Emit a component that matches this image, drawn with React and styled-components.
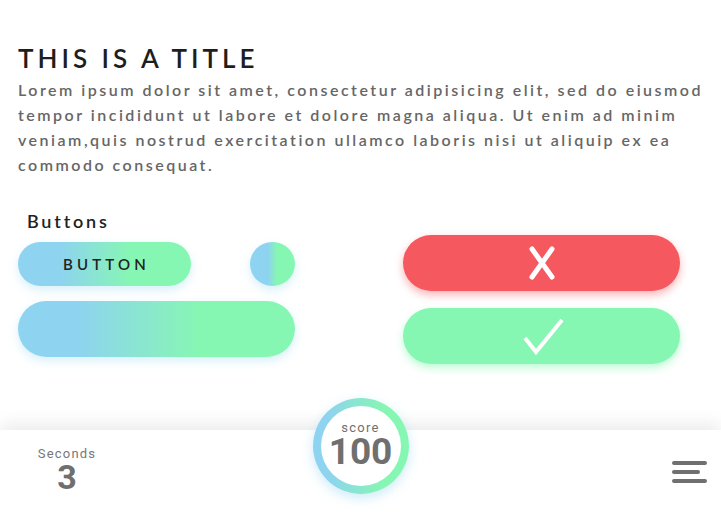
import React from 'react';
import styled, { createGlobalStyle } from 'styled-components';

const BLUE = '#8ed3f0';
const GREEN = '#86f7b2';
const RED = '#f5585f';

const GlobalStyle = createGlobalStyle`
  html, body {
    margin: 0;
    padding: 0;
    background: #fff;
  }
  body {
    font-family: Lato, "Open Sans", Arial, sans-serif;
  }
`;

const Page = styled.div`
  display: flex;
  flex-direction: column;
  min-height: 100vh;
  box-sizing: border-box;
  overflow: hidden;
`;

const Content = styled.main`
  padding: 43px 18px 0 18px;
`;

const Title = styled.h1`
  margin: 0;
  font-size: 26px;
  line-height: 30px;
  font-weight: 600;
  letter-spacing: 4px;
  color: #1e1e1e;
`;

const Body = styled.p`
  margin: 4px 0 0;
  font-size: 16px;
  line-height: 25px;
  font-weight: 600;
  letter-spacing: 2.5px;
  color: #666;
  white-space: nowrap;
`;

const Section = styled.section`
  display: grid;
  grid-template-columns: 277px 277px;
  column-gap: 108px;
  margin-top: 33px;
`;

const Column = styled.div`
  display: flex;
  flex-direction: column;
  gap: ${p => p.$gap}px;
  padding-top: ${p => p.$top || 0}px;
`;

const Label = styled.h2`
  margin: 0 0 -5px 9px;
  font-size: 18px;
  line-height: 22px;
  font-weight: 600;
  letter-spacing: 2.8px;
  color: #222;
`;

const Row = styled.div`
  display: flex;
  justify-content: space-between;
  align-items: center;
`;

const GradientButton = styled.button`
  border: none;
  outline: 0;
  padding: 0;
  cursor: pointer;
  width: ${p => p.$width};
  height: ${p => p.$height}px;
  border-radius: ${p => p.$height / 2}px;
  background: linear-gradient(to right, ${BLUE} ${p => p.$from}%, ${GREEN} ${p => p.$to}%);
  box-shadow: 0 4px 10px rgba(142, 211, 240, 0.35);
  font-family: Lato, Arial, sans-serif;
  font-size: 15px;
  font-weight: 600;
  letter-spacing: 4.2px;
  color: #222;
  padding-left: 4px;
`;

const SolidButton = styled.button`
  display: flex;
  align-items: center;
  justify-content: center;
  border: none;
  outline: 0;
  padding: 0;
  cursor: pointer;
  width: 100%;
  height: 56px;
  border-radius: 28px;
  background: ${p => p.$color};
  box-shadow: 0 4px 9px ${p => p.$glow};
`;

const Footer = styled.footer`
  margin-top: auto;
  height: 84px;
  background: #fff;
  box-shadow: 0 -6px 16px rgba(0, 0, 0, 0.08);
  display: grid;
  grid-template-columns: 134px 1fr 96px 1fr 134px;
  align-items: start;
`;

const Stat = styled.div`
  display: flex;
  flex-direction: column;
  align-items: center;
  gap: 3px;
  padding-top: 17px;
  font-family: Roboto, Arial, sans-serif;
  color: #6f6f6f;
`;

const StatLabel = styled.span`
  font-size: 13px;
  line-height: 14px;
  letter-spacing: 1.2px;
  color: #777;
`;

const StatValue = styled.span`
  font-size: 34px;
  line-height: 26px;
  font-weight: 700;
`;

const ScoreRing = styled.div`
  grid-column: 3;
  width: 96px;
  height: 96px;
  margin-top: -32px;
  border-radius: 50%;
  padding: 8px;
  box-sizing: border-box;
  background: linear-gradient(to right, ${BLUE} 15%, ${GREEN} 75%);
  box-shadow: 0 4px 12px rgba(142, 211, 240, 0.45);
`;

const ScoreInner = styled.div`
  width: 100%;
  height: 100%;
  border-radius: 50%;
  background: #fff;
  display: flex;
  flex-direction: column;
  align-items: center;
  gap: 4px;
  font-family: Roboto, Arial, sans-serif;
  color: #6f6f6f;
  padding-top: 16px;
  box-sizing: border-box;
`;

const ScoreLabel = styled.span`
  font-size: 13px;
  line-height: 12px;
  letter-spacing: 1.3px;
  color: #707070;
`;

const ScoreValue = styled.span`
  font-size: 37px;
  line-height: 28px;
  font-weight: 700;
`;

const Menu = styled.button`
  grid-column: 5;
  justify-self: end;
  margin: 31px 14px 0 0;
  width: 35px;
  display: flex;
  flex-direction: column;
  gap: 5px;
  border: none;
  background: none;
  padding: 0;
  cursor: pointer;
`;

const MenuLine = styled.span`
  display: block;
  height: 4px;
  border-radius: 2px;
  background: #707070;
  width: ${p => p.$short ? 28 : 35}px;
`;

const CrossIcon = () => (
  <svg width="32" height="38" viewBox="0 0 32 38">
    <g stroke="#fff" strokeWidth="5" strokeLinecap="round">
      <line x1="6" y1="5" x2="26" y2="33" />
      <line x1="26" y1="5" x2="6" y2="33" />
    </g>
  </svg>
);

const CheckIcon = () => (
  <svg width="44" height="40" viewBox="0 0 44 40">
    <polyline points="5,22 16,36 42,4" fill="none" stroke="#fff" strokeWidth="4" />
  </svg>
);

const App = () => {
  return (
    <Page>
      <GlobalStyle />
      <Content>
        <Title>THIS IS A TITLE</Title>
        <Body>
          Lorem ipsum dolor sit amet, consectetur adipisicing elit, sed do eiusmod<br />
          tempor incididunt ut labore et dolore magna aliqua. Ut enim ad minim<br />
          veniam,quis nostrud exercitation ullamco laboris nisi ut aliquip ex ea<br />
          commodo consequat.
        </Body>
        <Section>
          <Column $gap={15}>
            <Label>Buttons</Label>
            <Row>
              <GradientButton $width="173px" $height={44} $from={24} $to={66}>BUTTON</GradientButton>
              <GradientButton $width="45px" $height={44} $from={40} $to={60} aria-label="round" />
            </Row>
            <GradientButton $width="100%" $height={56} $from={21} $to={66} aria-label="wide" />
          </Column>
          <Column $gap={17} $top={25}>
            <SolidButton $color={RED} $glow="rgba(245, 88, 95, 0.45)" aria-label="cancel">
              <CrossIcon />
            </SolidButton>
            <SolidButton $color={GREEN} $glow="rgba(134, 247, 178, 0.55)" aria-label="confirm">
              <CheckIcon />
            </SolidButton>
          </Column>
        </Section>
      </Content>
      <Footer>
        <Stat>
          <StatLabel>Seconds</StatLabel>
          <StatValue>3</StatValue>
        </Stat>
        <ScoreRing>
          <ScoreInner>
            <ScoreLabel>score</ScoreLabel>
            <ScoreValue>100</ScoreValue>
          </ScoreInner>
        </ScoreRing>
        <Menu aria-label="menu">
          <MenuLine />
          <MenuLine $short />
          <MenuLine />
        </Menu>
      </Footer>
    </Page>
  );
};

export default App;
